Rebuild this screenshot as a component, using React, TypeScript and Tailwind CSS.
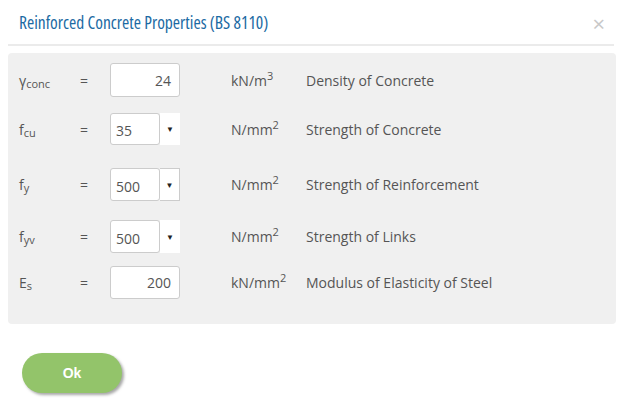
import type { ReactNode } from 'react';

interface Row {
  symbol: string;
  sub: string;
  value: string;
  kind: 'input' | 'select';
  arrowBorder?: boolean;
  unit: ReactNode;
  desc: string;
  mt: string;
  h: string;
}

const Sup = ({ children }: { children: ReactNode }) => (
  <sup className="text-[11px] relative -top-[6px]">{children}</sup>
);

const rows: Row[] = [
  {
    symbol: 'γ',
    sub: 'conc',
    value: '24',
    kind: 'input',
    unit: (
      <>
        kN/m<Sup>3</Sup>
      </>
    ),
    desc: 'Density of Concrete',
    mt: 'mt-0',
    h: 'h-[34px]',
  },
  {
    symbol: 'f',
    sub: 'cu',
    value: '35',
    kind: 'select',
    unit: (
      <>
        N/mm<Sup>2</Sup>
      </>
    ),
    desc: 'Strength of Concrete',
    mt: 'mt-[16px]',
    h: 'h-[32px]',
  },
  {
    symbol: 'f',
    sub: 'y',
    value: '500',
    kind: 'select',
    arrowBorder: true,
    unit: (
      <>
        N/mm<Sup>2</Sup>
      </>
    ),
    desc: 'Strength of Reinforcement',
    mt: 'mt-[23px]',
    h: 'h-[33px]',
  },
  {
    symbol: 'f',
    sub: 'yv',
    value: '500',
    kind: 'select',
    unit: (
      <>
        N/mm<Sup>2</Sup>
      </>
    ),
    desc: 'Strength of Links',
    mt: 'mt-[19px]',
    h: 'h-[33px]',
  },
  {
    symbol: 'E',
    sub: 's',
    value: '200',
    kind: 'input',
    unit: (
      <>
        kN/mm<Sup>2</Sup>
      </>
    ),
    desc: 'Modulus of Elasticity of Steel',
    mt: 'mt-[13px]',
    h: 'h-[33px]',
  },
];

function Field({ row }: { row: Row }) {
  if (row.kind === 'input') {
    return (
      <div className="w-[70px] h-full bg-white border border-[#cccccc] rounded-[3px] flex items-center justify-end pr-[8px] text-[14px] text-[#555555]">
        {row.value}
      </div>
    );
  }
  return (
    <div className="w-[70px] h-full flex">
      <div className="w-[50px] h-full bg-white border border-[#cccccc] rounded-[3px] flex items-center pl-[5px] pt-[3px] text-[14px] text-[#555555]">
        {row.value}
      </div>
      <div
        className={
          row.arrowBorder
            ? 'w-[20px] h-full bg-white border border-l-0 border-[#cccccc] flex items-center justify-center text-[8px] text-[#222222]'
            : 'w-[20px] h-full bg-white flex items-center justify-center text-[8px] text-[#222222]'
        }
      >
        ▼
      </div>
    </div>
  );
}

export default function App() {
  return (
    <div
      className="w-[629px] h-[416px] bg-white overflow-hidden"
      style={{ fontFamily: '"Open Sans", "Liberation Sans", sans-serif' }}
    >
      {/* header */}
      <div className="flex items-center justify-between h-[44px] pl-[19px] pr-[24px] pt-[1px]">
        <h1 className="text-[17.5px] text-[#1b6aa3] font-normal font-stretch-[75%]">
          Reinforced Concrete Properties (BS 8110)
        </h1>
        <span className="text-[22px] text-[#c8c8c8] leading-none">×</span>
      </div>
      <div className="ml-[8px] mr-[15px] h-[2px] bg-[#ebebeb]" />

      {/* properties */}
      <div className="mt-[7px] ml-[8px] w-[608px] h-[271px] bg-[#f0f0f0] rounded-[4px] pl-[11px] pt-[10px]">
        {rows.map((row, i) => (
          <div key={i} className={`flex items-center ${row.mt} ${row.h} text-[14px] text-[#555555]`}>
            <div className="w-[61px]">
              {row.symbol}
              <sub className="text-[11px] relative top-[2px]">{row.sub}</sub>
            </div>
            <div className="w-[30px]">=</div>
            <Field row={row} />
            <div className="w-[75px] ml-[51px]">{row.unit}</div>
            <div>{row.desc}</div>
          </div>
        ))}
      </div>

      {/* footer */}
      <div className="pl-[22px] pt-[29px]">
        <button
          className="w-[100px] h-[40px] rounded-full bg-[#93c46a] text-white text-[14px] font-bold shadow-[2px_2px_3px_rgba(0,0,0,0.35)]"
          style={{ fontFamily: '"Liberation Sans", Arial, sans-serif' }}
        >
          Ok
        </button>
      </div>
    </div>
  );
}
